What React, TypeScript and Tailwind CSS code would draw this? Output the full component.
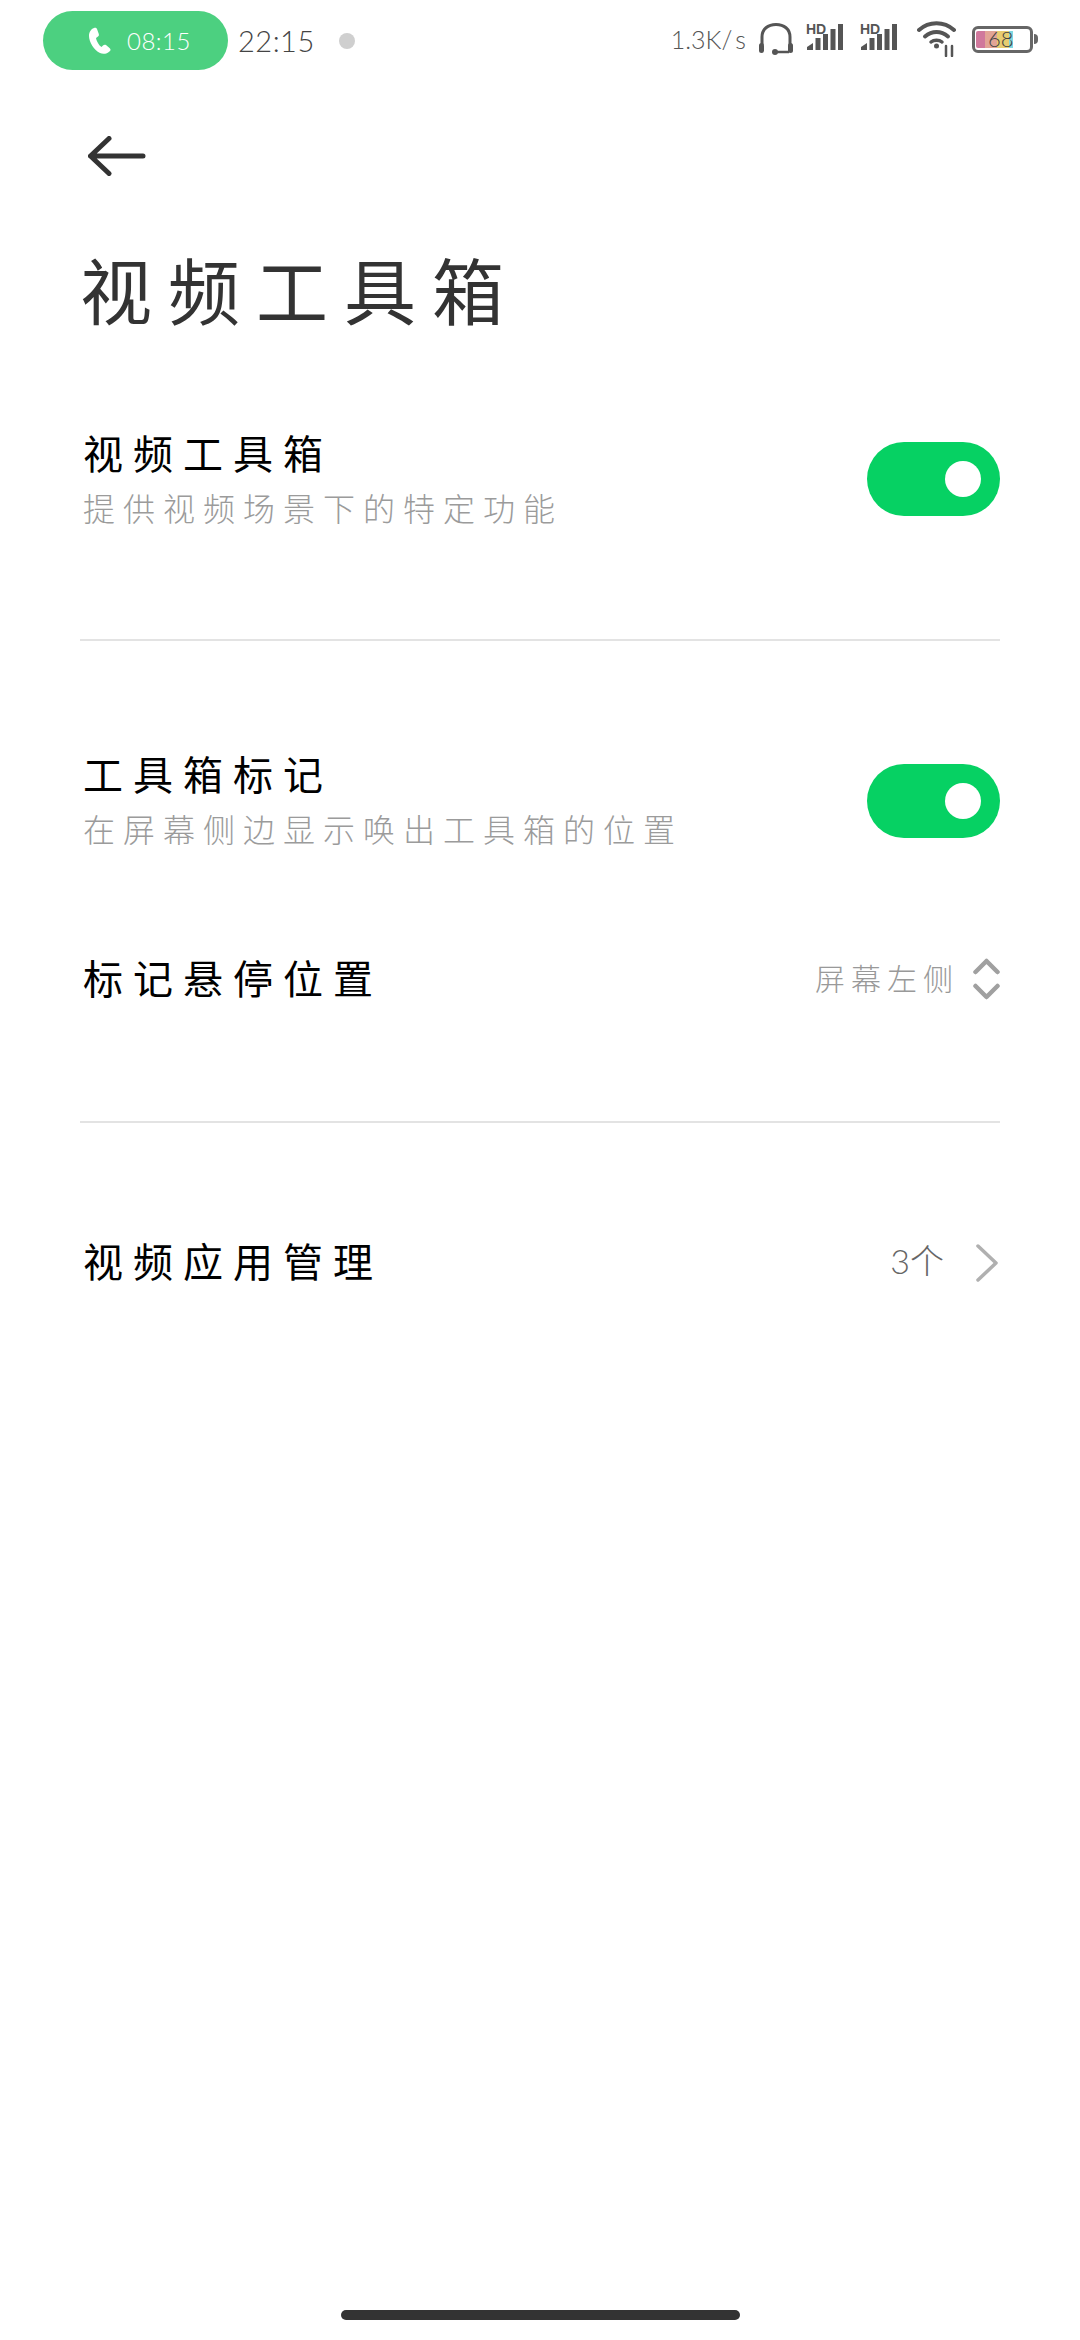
const cjk = 'font-["Noto_Sans_CJK_SC","Noto_Sans",sans-serif]';

function SignalIcon() {
    return (
        <svg width="38" height="31" viewBox="0 -3 38 31" className="mb-[7px] text-[#555]" fill="currentColor">
            <text x="0" y="11" fontSize="14" fontWeight="700" fontFamily="Liberation Sans, sans-serif">HD</text>
            <path d="M1 24 L7 20 V27 H1Z" />
            <rect x="9.5" y="15" width="5" height="12" />
            <rect x="17" y="11" width="5" height="16" />
            <rect x="24.5" y="6" width="5" height="21" />
            <rect x="32" y="1" width="5" height="26" />
        </svg>
    );
}

function Toggle() {
    return (
        <div className="mt-[4px] flex h-[74px] w-[133px] shrink-0 items-center justify-end rounded-full bg-[#06d163] pr-[19px]">
            <div className="h-[36px] w-[36px] rounded-full bg-white" />
        </div>
    );
}

function Divider() {
    return <div className="h-[2px] bg-[#e3e3e3]" />;
}

export default function App() {
    return (
        <div className={`flex h-[2340px] w-[1080px] flex-col bg-white ${cjk}`}>
            {/* Status bar */}
            <div className="flex h-[70px] items-center pt-[11px] pl-[43px] pr-[42px] font-['Lato',sans-serif] font-light">
                <div className="flex h-[59px] w-[185px] items-center rounded-full bg-[#4cd080] pl-[45px] text-[24px] text-white">
                    <svg width="24" height="28" viewBox="0 0 24 28" fill="white">
                        <path d="M6 1 C3 2 1 5 1 9 C1 15 6 23 12 26 C15 27.5 19 27 22 24 C23 23 22.5 22 21.5 21 L18 18 C17 17.5 16 17.5 15 18.5 L13.5 20 C11 18.5 8.5 14 8 11 L10 9.5 C11 9 11 8 10.8 7 L9 2 C8.5 1 7.5 .5 6 1Z" />
                    </svg>
                    <span className="ml-[15px] tracking-[0.5px]">08:15</span>
                </div>
                <span className="ml-[10px] text-[29px] leading-none tracking-[0.5px] text-[#444]">22:15</span>
                <div className="ml-[24px] h-[16px] w-[16px] rounded-full bg-[#cfcfcf]" />
                <div className="ml-auto mb-[3px] flex items-center">
                    <span className="text-[25px] leading-none text-[#555]">1.3K/<span className="ml-[3px]">s</span></span>
                    <svg className="ml-[12px]" width="36" height="32" viewBox="0 0 36 32" fill="none" stroke="#555">
                        <path d="M4 22 V14 C4 6 10 1.5 18 1.5 C26 1.5 32 6 32 14 V22" strokeWidth="3" />
                        <rect x="1" y="20" width="5" height="10" rx="2.5" fill="#555" stroke="none" />
                        <rect x="30" y="20" width="5" height="10" rx="2.5" fill="#555" stroke="none" />
                        <path d="M17 29 H31" strokeWidth="2.5" />
                        <circle cx="17" cy="29" r="3" fill="#555" stroke="none" />
                    </svg>
                    <div className="ml-[12px]"><SignalIcon /></div>
                    <div className="ml-[16px]"><SignalIcon /></div>
                    <svg className="ml-[19px]" width="40" height="36" viewBox="0 0 40 36" fill="none" stroke="#555" strokeLinecap="round">
                        <path d="M2 9 C12 0 27 0 37 9" strokeWidth="4" />
                        <path d="M8 15.5 C15 9.5 24 9.5 31 15.5" strokeWidth="4" />
                        <path d="M14 21 C17 18.5 22 18.5 25 21" strokeWidth="3.5" />
                        <circle cx="19.5" cy="25" r="2.5" fill="#555" stroke="none" />
                        <path d="M29 25 V35 M35 25 V35" strokeWidth="2.5" />
                    </svg>
                    <div className="relative ml-[15px] flex items-center">
                        <div className="flex h-[27px] w-[61px] items-center rounded-[6px] border-[3px] border-[#666] pl-[1px]">
                            <div className="h-[17px] w-[9px] rounded-l-[2px] bg-[#d0789c]" />
                            <div className="h-[17px] w-[12px] bg-[#e2a496]" />
                            <div className="h-[17px] w-[12px] bg-[#e8cc70]" />
                            <div className="h-[17px] w-[4px] bg-[#80d8e0]" />
                        </div>
                        <div className="ml-[1px] h-[10px] w-[4px] rounded-r-full bg-[#666]" />
                        <span className="absolute left-[16px] text-[22px] leading-none text-[#444]">68</span>
                    </div>
                </div>
            </div>

            {/* Back arrow */}
            <svg className="mt-[66px] ml-[88px]" width="58" height="40" viewBox="0 0 58 40" fill="none" stroke="#333" strokeWidth="5" strokeLinecap="round" strokeLinejoin="round">
                <path d="M2.5 20 H55 M21 2.5 L2.5 20 L21 37.5" />
            </svg>

            <h1 className="mt-[72px] ml-[80px] text-[72px] leading-[80px] tracking-[16px] text-[#333]">视频工具箱</h1>

            <div className="px-[80px]">
                <div className="mt-[99px] flex items-center justify-between">
                    <div className="pl-[3px]">
                        <p className="text-[40px] leading-[50px] tracking-[10px] text-black">视频工具箱</p>
                        <p className="mt-[10px] text-[32px] leading-[40px] tracking-[8px] font-light text-[#9b9b9b]">提供视频场景下的特定功能</p>
                    </div>
                    <Toggle />
                </div>
                <div className="mt-[112px]"><Divider /></div>

                <div className="mt-[107px] flex items-center justify-between">
                    <div className="pl-[3px]">
                        <p className="text-[40px] leading-[50px] tracking-[10px] text-black">工具箱标记</p>
                        <p className="mt-[10px] text-[32px] leading-[40px] tracking-[8px] font-light text-[#9b9b9b]">在屏幕侧边显示唤出工具箱的位置</p>
                    </div>
                    <div className="mt-[2px]"><Toggle /></div>
                </div>

                <div className="mt-[104px] flex h-[50px] items-center pl-[3px]">
                    <p className="text-[40px] leading-[50px] tracking-[10px] text-black">标记悬停位置</p>
                    <span className="ml-auto text-[30px] tracking-[6px] font-light text-[#999]">屏幕左侧</span>
                    <svg className="mt-[4px] ml-[14px]" width="27" height="42" viewBox="0 0 27 42" fill="none" stroke="#a0a0a0" strokeWidth="4.5" strokeLinecap="round" strokeLinejoin="round">
                        <path d="M2.5 14 L13.5 3 L24.5 14 M2.5 28 L13.5 39 L24.5 28" />
                    </svg>
                </div>
                <div className="mt-[119px]"><Divider /></div>

                <div className="mt-[112px] flex h-[50px] items-center pl-[3px]">
                    <p className="text-[40px] leading-[50px] tracking-[10px] text-black">视频应用管理</p>
                    <span className="ml-auto text-[34px] font-light text-[#666]"><span className="font-['Lato',sans-serif]">3</span>个</span>
                    <svg className="mt-[6px] ml-[32px] mr-[2px]" width="22" height="38" viewBox="0 0 22 38" fill="none" stroke="#b0b0b0" strokeWidth="3.5" strokeLinecap="round" strokeLinejoin="round">
                        <path d="M2 2 L20 19 L2 36" />
                    </svg>
                </div>
            </div>

            {/* Home indicator */}
            <div className="mt-auto mb-[20px] h-[10px] w-[399px] self-center rounded-full bg-[#333]" />
        </div>
    );
}
